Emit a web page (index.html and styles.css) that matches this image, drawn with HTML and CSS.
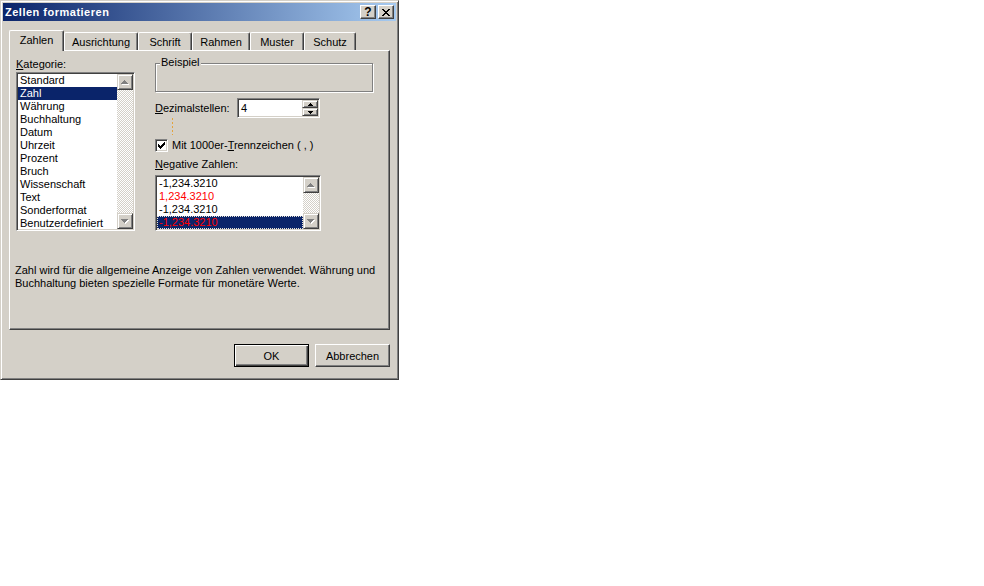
FILE: index.html
```html
<!DOCTYPE html>
<html lang="de">
<head>
<meta charset="utf-8">
<title>Zellen formatieren</title>
<link rel="stylesheet" href="styles.css">
</head>
<body>
<div class="dialog">
  <div class="titlebar">
    <span class="title">Zellen formatieren</span>
    <div class="caption-buttons">
      <div class="cap-btn cap-help">?</div>
      <div class="cap-btn">
        <svg width="8" height="7" viewBox="0 0 8 7" shape-rendering="crispEdges"><path fill="#000" d="M0 0h2v1h-2zM6 0h2v1h-2zM1 1h2v1h-2zM5 1h2v1h-2zM2 2h4v1h-4zM3 3h2v1h-2zM2 4h4v1h-4zM1 5h2v1h-2zM5 5h2v1h-2zM0 6h2v1h-2zM6 6h2v1h-2z"/></svg>
      </div>
    </div>
  </div>

  <div class="content">
    <div class="tabs">
      <div class="tab tab-zahlen active">Zahlen</div>
      <div class="tab tab-ausrichtung">Ausrichtung</div>
      <div class="tab tab-schrift">Schrift</div>
      <div class="tab tab-rahmen">Rahmen</div>
      <div class="tab tab-muster">Muster</div>
      <div class="tab tab-schutz">Schutz</div>
    </div>

    <div class="panel">
      <div class="panel-grid">
        <div class="col-left">
          <div class="label"><u>K</u>ategorie:</div>
          <div class="listbox cat-list">
            <div class="items">
              <div class="item">Standard</div>
              <div class="item selected">Zahl</div>
              <div class="item">Währung</div>
              <div class="item">Buchhaltung</div>
              <div class="item">Datum</div>
              <div class="item">Uhrzeit</div>
              <div class="item">Prozent</div>
              <div class="item">Bruch</div>
              <div class="item">Wissenschaft</div>
              <div class="item">Text</div>
              <div class="item">Sonderformat</div>
              <div class="item">Benutzerdefiniert</div>
            </div>
            <div class="vscroll">
              <div class="sb-btn">
                <svg width="8" height="5" viewBox="0 0 8 5" shape-rendering="crispEdges"><path fill="#fff" d="M4 1h1v1h1v1h1v1h1v1h-7v-1h1v-1h1v-1h1z"/><path fill="#808080" d="M3 0h1v1h1v1h1v1h1v1h-7v-1h1v-1h1v-1h1z"/></svg>
              </div>
              <div class="sb-track"></div>
              <div class="sb-btn">
                <svg width="8" height="5" viewBox="0 0 8 5" shape-rendering="crispEdges"><path fill="#fff" d="M1 1h7v1h-1v1h-1v1h-1v1h-1v-1h-1v-1h-1v-1h-1z"/><path fill="#808080" d="M0 0h7v1h-1v1h-1v1h-1v1h-1v-1h-1v-1h-1v-1h-1z"/></svg>
              </div>
            </div>
          </div>
        </div>

        <div class="col-right">
          <div class="group"><span class="group-label">Beispiel</span></div>

          <div class="field-row">
            <span class="field-label"><u>D</u>ezimalstellen:</span>
            <div class="spin">
              <span class="spin-text">4</span>
              <div class="spin-btns">
                <div class="spin-btn">
                  <svg width="5" height="3" viewBox="0 0 5 3" shape-rendering="crispEdges"><path fill="#000" d="M2 0h1v1h1v1h1v1h-5v-1h1v-1h1z"/></svg>
                </div>
                <div class="spin-btn">
                  <svg width="5" height="3" viewBox="0 0 5 3" shape-rendering="crispEdges"><path fill="#000" d="M0 0h5v1h-1v1h-1v1h-1v-1h-1v-1h-1z"/></svg>
                </div>
              </div>
            </div>
          </div>

          <div class="focus-dash"></div>

          <div class="check-row">
            <span class="checkbox">
              <svg width="7" height="7" viewBox="0 0 7 7" shape-rendering="crispEdges"><path fill="#000" d="M6 0h1v1h-1zM5 1h2v1h-2zM0 2h1v1h-1zM4 2h3v1h-3zM0 3h2v1h-2zM3 3h3v1h-3zM0 4h5v1h-5zM1 5h3v1h-3zM2 6h1v1h-1z"/></svg>
            </span>
            <span>Mit 1000er-<u>T</u>rennzeichen ( , )</span>
          </div>

          <div class="label neg-label"><u>N</u>egative Zahlen:</div>
          <div class="listbox neg-list">
            <div class="items">
              <div class="item">-1,234.3210</div>
              <div class="item red">1,234.3210</div>
              <div class="item">-1,234.3210</div>
              <div class="item red selected focused">-1,234.3210</div>
            </div>
            <div class="vscroll">
              <div class="sb-btn">
                <svg width="8" height="5" viewBox="0 0 8 5" shape-rendering="crispEdges"><path fill="#fff" d="M4 1h1v1h1v1h1v1h1v1h-7v-1h1v-1h1v-1h1z"/><path fill="#808080" d="M3 0h1v1h1v1h1v1h1v1h-7v-1h1v-1h1v-1h1z"/></svg>
              </div>
              <div class="sb-track"></div>
              <div class="sb-btn">
                <svg width="8" height="5" viewBox="0 0 8 5" shape-rendering="crispEdges"><path fill="#fff" d="M1 1h7v1h-1v1h-1v1h-1v1h-1v-1h-1v-1h-1v-1h-1z"/><path fill="#808080" d="M0 0h7v1h-1v1h-1v1h-1v1h-1v-1h-1v-1h-1v-1h-1z"/></svg>
              </div>
            </div>
          </div>
        </div>
      </div>

      <p class="desc">Zahl wird für die allgemeine Anzeige von Zahlen verwendet. Währung und Buchhaltung bieten spezielle Formate für monetäre Werte.</p>
    </div>

    <div class="buttons">
      <div class="btn btn-default">OK</div>
      <div class="btn">Abbrechen</div>
    </div>
  </div>
</div>
</body>
</html>
```

FILE: styles.css
```css
* { box-sizing: border-box; }

body {
  margin: 0;
  background: #fff;
  font-family: "Liberation Sans", Arial, sans-serif;
  font-size: 11px;
  color: #000;
}

u { text-decoration: underline; text-underline-offset: 1px; }

.dialog {
  width: 399px;
  height: 380px;
  background: #d4d0c8;
  border: 1px solid;
  border-color: #d4d0c8 #404040 #404040 #d4d0c8;
  box-shadow: inset 1px 1px #fff, inset -1px -1px #808080;
  padding: 2px;
}

/* title bar */
.titlebar {
  height: 18px;
  display: flex;
  align-items: center;
  justify-content: space-between;
  background: linear-gradient(90deg, #0a246a, #a6caf0);
  padding: 0 2px;
}
.title {
  color: #fff;
  font-weight: bold;
  line-height: 18px;
  letter-spacing: 0.5px;
}
.caption-buttons { display: flex; gap: 2px; }
.cap-btn {
  width: 16px;
  height: 14px;
  background: #d4d0c8;
  border: 1px solid;
  border-color: #fff #404040 #404040 #fff;
  box-shadow: inset -1px -1px #808080;
  display: flex;
  align-items: center;
  justify-content: center;
  font-weight: bold;
  font-size: 12px;
  line-height: 12px;
}
.cap-help { padding-bottom: 1px; }

.content { padding: 9px 6px 0; }

/* tabs */
.tabs {
  display: flex;
  align-items: flex-end;
  height: 20px;
  position: relative;
  z-index: 1;
}
.tab {
  height: 18px;
  background: #d4d0c8;
  border-top: 1px solid #fff;
  border-left: 1px solid #fff;
  border-right: 1px solid #404040;
  box-shadow: inset -1px 0 #808080;
  border-radius: 2px 2px 0 0;
  display: flex;
  align-items: center;
  justify-content: center;
  padding-top: 1px;
  white-space: nowrap;
}
.tab.active {
  height: 21px;
  margin-bottom: -1px;
  padding-top: 0;
  padding-bottom: 2px;
}
.tab-zahlen { width: 55px; }
.tab-ausrichtung { width: 74px; }
.tab-schrift { width: 54px; }
.tab-rahmen { width: 58px; }
.tab-muster { width: 54px; }
.tab-schutz { width: 52px; }

/* panel */
.panel {
  height: 280px;
  border: 1px solid;
  border-color: #fff #404040 #404040 #fff;
  box-shadow: inset -1px -1px #808080;
  padding: 7px 0 0 6px;
}
.panel-grid {
  display: grid;
  grid-template-columns: 119px 218px;
  column-gap: 20px;
  align-items: start;
}

.label { line-height: 13px; height: 13px; }
.col-left .label { margin-bottom: 1px; }

/* listbox */
.listbox {
  display: flex;
  background: #fff;
  border: 1px solid;
  border-color: #808080 #fff #fff #808080;
  box-shadow: inset 1px 1px #404040, inset -1px -1px #d4d0c8;
  padding: 1px;
  overflow: hidden;
}
.cat-list { height: 159px; }
.items { flex: 1; overflow: hidden; min-width: 0; }
.item {
  height: 13px;
  line-height: 13px;
  padding-left: 2px;
  white-space: nowrap;
}
.item.selected { background: #0a246a; color: #fff; }
.item.red { color: #ff0000; }
.item.focused { outline: 1px dotted #e8e4d8; outline-offset: -1px; }

.vscroll {
  width: 16px;
  display: flex;
  flex-direction: column;
}
.sb-btn {
  width: 16px;
  height: 16px;
  flex: none;
  background: #d4d0c8;
  border: 1px solid;
  border-color: #d4d0c8 #404040 #404040 #d4d0c8;
  box-shadow: inset 1px 1px #fff, inset -1px -1px #808080;
  display: flex;
  align-items: center;
  justify-content: center;
}
.sb-track {
  flex: 1;
  background-image: conic-gradient(#fff 25%, #d4d0c8 0 50%, #fff 0 75%, #d4d0c8 0);
  background-size: 2px 2px;
}

/* right column */
.col-right { padding-top: 5px; }

.group {
  height: 29px;
  border: 1px solid #808080;
  box-shadow: inset 1px 1px #fff, 1px 1px #fff;
}
.group-label {
  display: block;
  width: fit-content;
  margin: -8px 0 0 4px;
  padding: 0 1px;
  line-height: 13px;
  background: #d4d0c8;
}

.field-row {
  display: flex;
  align-items: center;
  margin-top: 6px;
  height: 20px;
}
.field-label { width: 82px; }
.spin {
  width: 83px;
  height: 20px;
  display: flex;
  background: #fff;
  border: 1px solid;
  border-color: #808080 #fff #fff #808080;
  box-shadow: inset 1px 1px #404040, inset -1px -1px #d4d0c8;
  padding: 1px;
}
.spin-text { flex: 1; padding-left: 2px; line-height: 16px; }
.spin-btns { width: 16px; display: flex; flex-direction: column; }
.spin-btn {
  height: 8px;
  background: #d4d0c8;
  border: 1px solid;
  border-color: #d4d0c8 #404040 #404040 #d4d0c8;
  box-shadow: inset 1px 1px #fff, inset -1px -1px #808080;
  display: flex;
  align-items: center;
  justify-content: center;
}

.focus-dash {
  width: 1px;
  height: 17px;
  margin-left: 17px;
  background: repeating-linear-gradient(180deg, #e3a33d 0 2px, transparent 2px 4px);
}

.check-row {
  display: flex;
  align-items: center;
  gap: 4px;
  height: 13px;
  margin-top: 4px;
  line-height: 13px;
}
.checkbox {
  width: 13px;
  height: 13px;
  flex: none;
  background: #fff;
  border: 1px solid;
  border-color: #808080 #fff #fff #808080;
  box-shadow: inset 1px 1px #404040, inset -1px -1px #d4d0c8;
  display: flex;
  align-items: center;
  justify-content: center;
}

.neg-label { margin-top: 6px; }
.neg-list {
  width: 166px;
  height: 56px;
  margin-top: 4px;
}

.desc {
  margin: 33px 0 0 -1px;
  width: 362px;
  line-height: 13px;
}

/* buttons */
.buttons {
  display: flex;
  justify-content: flex-end;
  gap: 6px;
  margin-top: 14px;
}
.btn {
  width: 75px;
  height: 23px;
  background: #d4d0c8;
  border: 1px solid;
  border-color: #fff #404040 #404040 #fff;
  box-shadow: inset -1px -1px #808080;
  display: flex;
  align-items: center;
  justify-content: center;
}
.btn-default {
  border-color: #000;
  box-shadow: inset 1px 1px #fff, inset -1px -1px #404040, inset -2px -2px #808080;
}
```
